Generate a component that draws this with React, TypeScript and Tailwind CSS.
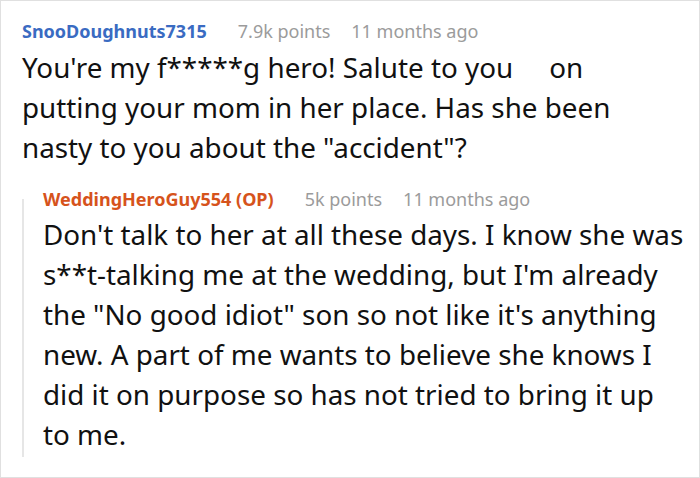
const font = { fontFamily: '"Noto Sans", "Open Sans", sans-serif' }

type Meta = { user: string; userClass: string; points: string; age: string }

function MetaRow({ user, userClass, points, age }: Meta) {
  return (
    <div className="flex items-baseline text-[18px] leading-[24px]">
      <span className={`font-bold ${userClass}`}>{user}</span>
      <span className="ml-[31px] text-[#9b9b9b]">{points}</span>
      <span className="ml-[21px] text-[#9b9b9b]">{age}</span>
    </div>
  )
}

export default function App() {
  return (
    <div style={font} className="w-[700px] h-[478px] bg-white border border-[#e0e0e0] pl-[21px] pt-[18px] text-[#111] overflow-hidden">
      {/* parent comment */}
      <MetaRow user="SnooDoughnuts7315" userClass="text-[#3a6bc2]" points="7.9k points" age="11 months ago" />
      <p className="mt-[4px] w-[640px] text-[27.8px] leading-[40px]">
        You're my f*****g hero! Salute to you&nbsp;&nbsp;&nbsp;&nbsp; on putting your mom in her place. Has she been nasty to you about the "accident"?
      </p>

      {/* reply */}
      <div className="mt-[20px] flex">
        <div className="w-[2px] mt-[12px] bg-[#e6e6e6] shrink-0" />
        <div className="pl-[19px] pb-[3px]">
          <MetaRow user="WeddingHeroGuy554 (OP)" userClass="text-[#d6531c]" points="5k points" age="11 months ago" />
          <p className="mt-[3px] w-[643px] text-[27.8px] leading-[40px]">
            Don't talk to her at all these days. I know she was s**t-talking me at the wedding, but I'm already the "No good idiot" son so not like it's anything new. A part of me wants to believe she knows I did it on purpose so has not tried to bring it up to me.
          </p>
        </div>
      </div>
    </div>
  )
}
